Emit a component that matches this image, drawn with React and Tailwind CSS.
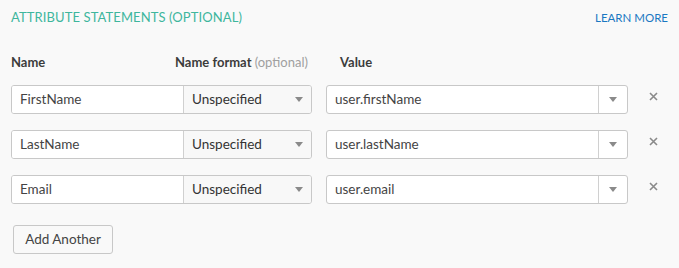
import React from 'react';

const rows = [
  { name: 'FirstName', value: 'user.firstName' },
  { name: 'LastName', value: 'user.lastName' },
  { name: 'Email', value: 'user.email' },
];

const Caret = () => (
  <svg width="8" height="5" viewBox="0 0 8 5" className="block">
    <path d="M0 0 H8 L4 5 Z" fill="#8a8a8a" />
  </svg>
);

const App = () => {
  return (
    <div
      className="w-[679px] h-[268px] bg-[#f9f9f9] text-[#333] overflow-hidden"
      style={{ fontFamily: 'Lato, "Open Sans", Arial, sans-serif' }}
    >
      {/* Header */}
      <div className="flex items-center justify-between pl-[11px] pr-[11px] pt-[9px] h-[27px]">
        <h2 className="text-[13px] text-[#3eb69d] tracking-[0.1px]">ATTRIBUTE STATEMENTS (OPTIONAL)</h2>
        <a className="text-[11.5px] text-[#1a78c2]">LEARN MORE</a>
      </div>

      {/* Column labels */}
      <div className="flex items-center pl-[11px] mt-[29px] h-[14px] text-[13px] font-bold text-[#3c3c3c]">
        <div className="w-[164px]">Name</div>
        <div className="w-[165px]">
          Name format <span className="font-normal text-[#a0a0a0]">(optional)</span>
        </div>
        <div>Value</div>
      </div>

      {/* Rows */}
      <div className="flex flex-col gap-[16px] pl-[11px] mt-[15px]">
        {rows.map((r) => (
          <div key={r.name} className="flex items-center h-[29px]">
            <div className="flex h-[29px] w-[301px] border border-[#c8c8c8] rounded-[3px] overflow-hidden text-[13.5px]">
              <div className="w-[172px] bg-white border-r border-[#d0d0d0] flex items-center pl-[8px] text-[#444]">
                {r.name}
              </div>
              <div className="flex-1 bg-[#f8f8f8] flex items-center justify-between pl-[8px] pr-[8px] text-[#333]">
                <span>Unspecified</span>
                <Caret />
              </div>
            </div>
            <div className="ml-[14px] flex h-[29px] w-[302px] border border-[#c8c8c8] rounded-[3px] overflow-hidden bg-white text-[13.5px]">
              <div className="flex-1 flex items-center pl-[8px] text-[#444]">{r.value}</div>
              <div className="w-[29px] border-l border-[#d0d0d0] flex items-center justify-center">
                <Caret />
              </div>
            </div>
            <div className="ml-[21px] -mt-[6px] text-[#8a8a8a]">
              <svg width="9" height="9" viewBox="0 0 9 9" className="block">
                <path d="M1 1 L8 8 M8 1 L1 8" stroke="#8a8a8a" strokeWidth="1.6" />
              </svg>
            </div>
          </div>
        ))}
      </div>

      {/* Add another */}
      <div className="pl-[13px] mt-[21px]">
        <button className="h-[29px] w-[100px] border border-[#c8c8c8] rounded-[3px] bg-[#f9f9f9] text-[13.5px] text-[#444]">
          Add Another
        </button>
      </div>
    </div>
  );
};

export default App;
